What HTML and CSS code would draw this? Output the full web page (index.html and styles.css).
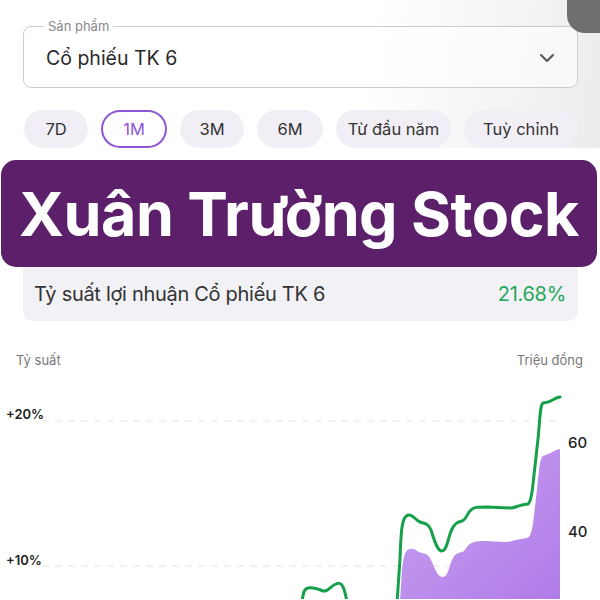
FILE: index.html
```html
<!DOCTYPE html>
<html>
    <head>
        <meta charset="utf-8">
        <title>Xuân Trường Stock</title>
        <link rel="stylesheet" href="styles.css">
    </head>
    <body>
        <div class="notch"></div>
        <div class="top">
            <fieldset class="picker">
                <legend>Sản phẩm</legend>
                <span class="value">Cổ phiếu TK 6</span>
                <svg class="chevron" width="16" height="10" viewBox="0 0 16 10">
                    <path d="M2 2 L8 8 L14 2" fill="none" stroke="#555" stroke-width="2" stroke-linecap="round" stroke-linejoin="round"/>
                </svg>
            </fieldset>

            <div class="ranges">
                <span class="pill">7D</span>
                <span class="pill active">1M</span>
                <span class="pill">3M</span>
                <span class="pill">6M</span>
                <span class="pill">Từ đầu năm</span>
                <span class="pill">Tuỳ chỉnh</span>
            </div>
        </div>

        <div class="banner">Xuân Trường Stock</div>

        <div class="profit">
            <span>Tỷ suất lợi nhuận Cổ phiếu TK 6</span>
            <span class="up">21.68%</span>
        </div>

        <div class="axis-titles">
            <span>Tỷ suất</span>
            <span>Triệu đồng</span>
        </div>

        <svg class="chart" width="600" height="220" viewBox="0 380 600 220">
            <defs>
                <linearGradient id="fill" x1="0" y1="0" x2="1" y2="1">
                    <stop offset="0" stop-color="#c9a3f0"/>
                    <stop offset="1" stop-color="#b07be8"/>
                </linearGradient>
            </defs>
            <!-- grid -->
            <line x1="42" y1="422" x2="560" y2="422" class="grid"/>
            <line x1="42" y1="567" x2="560" y2="567" class="grid"/>
            <text x="6" y="420" class="left">+20%</text>
            <text x="6" y="566" class="left">+10%</text>
            <text x="568" y="449" class="right">60</text>
            <text x="568" y="538" class="right">40</text>

            <!-- value area -->
            <path fill="url(#fill)" d="M400,602 L402,570 C404,556 405,551 410,550 C415,549 417,553 422,554 C427,555 429,556 432,563 C436,572 438,578 443,578 C448,578 449,567 452,561 C455,555 457,554 462,553 C466,552 466,547 470,545 C473,543 475,542 485,542 L505,543 C510,543 512,542 516,541 L527,539 C530,538 531,535 533,525 L537,490 C539,470 540,459 543,457 L548,455 C552,454 554,451 560,450 L560,602 Z"/>

            <!-- return line -->
            <path class="line" d="M302,604 C303,594 304,590 308,589 C313,588 318,590 323,592 C328,593 330,588 334,586 C338,584 341,583 343,588 C345,592 346,597 347,604"/>
            <path class="line" d="M397,604 L400,560 C401,530 402,518 408,516 C413,515 415,521 420,523 C425,525 428,524 431,531 C434,540 437,552 442,552 C447,552 448,538 452,530 C455,524 458,523 462,522 C466,521 467,514 471,511 C474,508 477,508 487,508 L512,509 C516,508 518,507 522,506 L528,505 C531,503 532,495 533,485 L538,440 C540,420 540,406 543,404 L548,403 C552,402 554,399 560,398"/>
        </svg>
    </body>
</html>
```

FILE: styles.css
```css
body {
    margin: 0;
    font-family: Inter, "Noto Sans", sans-serif;
    color: #2a2a2a;
    background: #fff;
    overflow: hidden;
}
.top {
    padding-top: 18px;
    background: linear-gradient(100deg, #fff 60%, #ececec 100%);
}
.notch {
    position: absolute;
    top: -20px;
    right: -10px;
    width: 43px;
    height: 53px;
    background: #6f6f6f;
    border-radius: 0 0 0 18px;
}
.picker {
    display: flex;
    align-items: center;
    justify-content: space-between;
    height: 62px;
    margin: 0 22px 0 23px;
    padding: 0 22px 6px 22px;
    border: 1px solid #cdcdcd;
    border-radius: 8px;
    background: rgba(255, 255, 255, 0.6);
}
.picker legend {
    margin-left: -2px;
    padding: 0 4px;
    font-size: 13px;
    color: #8a8a8a;
}
.value {
    font-size: 19.5px;
}
.ranges {
    display: grid;
    grid-template-columns: 64px 66px 64px 66px 115px 1fr;
    gap: 13px;
    margin: 22px 22px 0 24px;
}
.pill {
    display: flex;
    align-items: center;
    justify-content: center;
    height: 38px;
    border-radius: 19px;
    background: #f1eff5;
    font-size: 16.5px;
    color: #333;
}
.pill.active {
    background: #fff;
    box-shadow: inset 0 0 0 2px #8e55d6;
    color: #8e55d6;
}
.banner {
    margin: 12px 3px 0 1px;
    height: 107px;
    display: flex;
    align-items: center;
    justify-content: center;
    background: #5c1f6a;
    border-radius: 15px;
    color: #fff;
    font-size: 61px;
    font-weight: 700;
    letter-spacing: -0.5px;
}
.profit {
    display: flex;
    justify-content: space-between;
    align-items: center;
    height: 54px;
    margin: 0 22px 0 23px;
    padding: 0 12px 0 11px;
    background: #f2f1f6;
    border-radius: 0 0 10px 10px;
    font-size: 20px;
    letter-spacing: -0.3px;
    color: #333;
}
.up {
    color: #25a85a;
}
.axis-titles {
    display: flex;
    justify-content: space-between;
    margin-top: 31px;
    padding: 0 17px 0 16px;
    font-size: 13px;
    color: #777;
}
.chart {
    display: block;
    margin-top: 11px;
}
.grid {
    stroke: #e2e2e2;
    stroke-width: 1;
    stroke-dasharray: 7 6;
}
.left {
    font-size: 13px;
    font-weight: 600;
    fill: #222;
}
.right {
    font-size: 15px;
    font-weight: 500;
    fill: #222;
}
.line {
    fill: none;
    stroke: #17a04a;
    stroke-width: 3;
    stroke-linejoin: round;
    stroke-linecap: round;
}
```
